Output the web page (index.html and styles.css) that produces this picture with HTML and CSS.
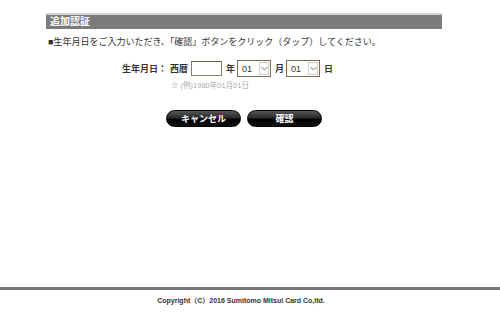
FILE: index.html
```html
<!DOCTYPE html>
<html lang="ja">
<head>
    <meta charset="UTF-8">
    <meta name="viewport" content="width=device-width, initial-scale=1.0">
    <title>追加認証</title>
    <link rel="stylesheet" href="styles.css">
</head>
<body>
    <div class="page">
        <div class="main">
            <h2 class="title">追加認証</h2>
            <p class="lead">■生年月日をご入力いただき、「確認」ボタンをクリック（タップ）してください。</p>

            <div class="form">
                <div class="row">
                    <span class="label">生年月日：</span>
                    <span class="era">西暦</span>
                    <input type="text" class="year" maxlength="4">
                    <span class="unit">年</span>
                    <div class="select">
                        <span>01</span>
                        <span class="arrow"><svg width="7" height="5" viewBox="0 0 7 5"><path d="M0.5 1 L3.5 4 L6.5 1" fill="none" stroke="#777" stroke-width="1"/></svg></span>
                    </div>
                    <span class="unit">月</span>
                    <div class="select">
                        <span>01</span>
                        <span class="arrow"><svg width="7" height="5" viewBox="0 0 7 5"><path d="M0.5 1 L3.5 4 L6.5 1" fill="none" stroke="#777" stroke-width="1"/></svg></span>
                    </div>
                    <span class="unit">日</span>
                </div>
                <div class="note">※ (例)1980年01月01日</div>
            </div>

            <div class="buttons">
                <button class="btn">キャンセル</button>
                <button class="btn">確認</button>
            </div>
        </div>

        <div class="footer">
            <p>Copyright（C）2016 Sumitomo Mitsui Card Co,ltd.</p>
        </div>
    </div>
</body>
</html>
```

FILE: styles.css
```css
body {
    margin: 0;
    padding: 0;
    font-family: "Liberation Sans", "Noto Sans CJK JP", sans-serif;
    color: #333;
    background-color: #fff;
}

.page {
    height: 318px;
    display: flex;
    flex-direction: column;
}

.main {
    width: 396px;
    margin-left: 46px;
    padding-top: 13px;
    flex: 1;
}

.title {
    margin: 0;
    height: 14px;
    line-height: 14px;
    background-color: #7b7b7b;
    border-top: 2px solid #d0d0d0;
    color: #fff;
    font-size: 10px;
    font-weight: bold;
    padding-left: 4px;
}

.lead {
    margin: 7px 0 0 2px;
    font-size: 9px;
    line-height: 13px;
    color: #333;
}

.form {
    margin-top: 11px;
    padding-left: 76px;
}

.row {
    display: flex;
    align-items: center;
    height: 17px;
    font-size: 9px;
    font-weight: bold;
}

.label {
    margin-right: 3px;
}

.era {
    margin-right: 3px;
}

.unit {
    margin: 0 2px 0 4px;
}

.year {
    width: 31px;
    height: 15px;
    box-sizing: border-box;
    border: 1px solid #8a7a6a;
    border-top-color: #6a5a4a;
    padding: 0;
    margin: 0;
}

.select {
    display: flex;
    align-items: center;
    justify-content: space-between;
    width: 34px;
    height: 17px;
    box-sizing: border-box;
    border: 1px solid #7a6a5a;
    font-size: 9px;
    font-weight: normal;
    color: #333;
    padding-left: 4px;
}

.arrow {
    width: 10px;
    height: 13px;
    margin-right: 1px;
    display: flex;
    align-items: center;
    justify-content: center;
    border: 1px solid #ccc;
    box-sizing: border-box;
}

.note {
    margin: 2px 0 0 49px;
    font-size: 7.5px;
    color: #aaa;
}

.buttons {
    display: flex;
    justify-content: center;
    gap: 6px;
    margin-top: 20px;
}

.btn {
    width: 75px;
    height: 17px;
    border: 1px solid #000;
    border-radius: 9px;
    background: linear-gradient(#555 0%, #2a2a2a 45%, #000 55%, #111 100%);
    color: #fff;
    font-family: "Liberation Sans", "Noto Sans CJK JP", sans-serif;
    font-size: 9px;
    font-weight: bold;
    padding: 0;
    cursor: pointer;
}

.footer {
    border-top: 3px solid #777;
    height: 27px;
    margin-bottom: 1px;
    padding-right: 18px;
}

.footer p {
    margin: 5px 0 0;
    text-align: center;
    font-size: 7px;
    font-weight: bold;
    color: #333;
}
```
